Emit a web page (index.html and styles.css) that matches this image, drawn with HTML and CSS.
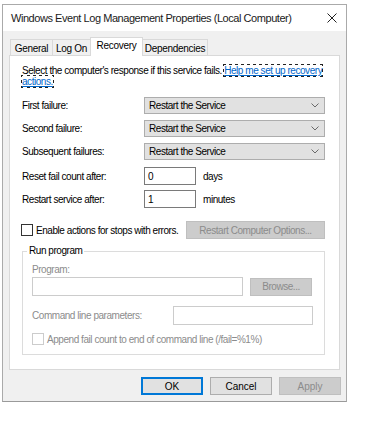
FILE: index.html
```html
<html lang="en-US"><head>
    <title>Windows Event Log Management Properties</title>
<link rel="stylesheet" href="styles.css">
</head>

<body>
    <div class="window">
        <div class="titlebar">
            <span class="title">Windows Event Log Management Properties (Local Computer)</span>
            <svg class="close" width="10" height="10" viewBox="0 0 10 10">
                <path d="M0.5 0.5 L9.5 9.5 M9.5 0.5 L0.5 9.5" stroke="#222" stroke-width="1" fill="none"/>
            </svg>
        </div>
        <div class="client">
            <ul class="tabs">
                <li class="tab tab-general">General</li>
                <li class="tab tab-logon">Log On</li>
                <li class="tab tab-recovery active">Recovery</li>
                <li class="tab tab-deps">Dependencies</li>
            </ul>
            <section class="panel">
                <p class="intro"><span>Select the computer's response if this service fails.</span> <a href="#" class="help"><span>Help me set up recovery</span> <span>actions.</span></a></p>

                <div class="row row-select">
                    <label>First failure:</label>
                    <div class="select">Restart the Service
                        <svg class="chevron" width="8" height="5" viewBox="0 0 8 5"><polyline points="0.5,0.5 4,4 7.5,0.5" stroke="#6a6a6a" fill="none"/></svg>
                    </div>
                </div>
                <div class="row row-select">
                    <label>Second failure:</label>
                    <div class="select">Restart the Service
                        <svg class="chevron" width="8" height="5" viewBox="0 0 8 5"><polyline points="0.5,0.5 4,4 7.5,0.5" stroke="#6a6a6a" fill="none"/></svg>
                    </div>
                </div>
                <div class="row row-select">
                    <label>Subsequent failures:</label>
                    <div class="select">Restart the Service
                        <svg class="chevron" width="8" height="5" viewBox="0 0 8 5"><polyline points="0.5,0.5 4,4 7.5,0.5" stroke="#6a6a6a" fill="none"/></svg>
                    </div>
                </div>
                <div class="row row-input row-reset">
                    <label>Reset fail count after:</label>
                    <div class="textbox">0</div>
                    <span class="unit">days</span>
                </div>
                <div class="row row-input">
                    <label>Restart service after:</label>
                    <div class="textbox">1</div>
                    <span class="unit">minutes</span>
                </div>

                <div class="errors-row">
                    <span class="checkbox"></span>
                    <span class="check-label">Enable actions for stops with errors.</span>
                    <span class="button disabled restart-btn">Restart Computer Options...</span>
                </div>

                <fieldset class="group">
                    <legend>Run program</legend>
                    <div class="group-body">
                        <div class="dim program-label">Program:</div>
                        <div class="program-row">
                            <div class="textbox off program-box"></div>
                            <span class="button disabled browse-btn">Browse...</span>
                        </div>
                        <div class="cmd-row">
                            <span class="dim">Command line parameters:</span>
                            <div class="textbox off cmd-box"></div>
                        </div>
                        <div class="append-row">
                            <span class="checkbox off"></span>
                            <span class="dim">Append fail count to end of command line (/fail=%1%)</span>
                        </div>
                    </div>
                </fieldset>
            </section>
            <div class="buttons">
                <span class="button default">OK</span>
                <span class="button">Cancel</span>
                <span class="button disabled">Apply</span>
            </div>
        </div>
    </div>
</body></html>
```

FILE: styles.css
```css
body {
    margin: 0;
    background-color: #ffffff;
    font: 10px "Liberation Sans", Arial, sans-serif;
    color: #000000;
}
.window {
    width: 345px;
    margin: 4px 0 0 2px;
    border: 1px solid #aaaaaa;
    border-bottom-color: #9a9a9a;
    box-sizing: border-box;
}
.titlebar {
    height: 26px;
    background-color: #ffffff;
    display: flex;
    align-items: center;
    padding: 0 8px;
}
.title {
    flex: 1;
    font-size: 11px;
    color: #1a1a1a;
    letter-spacing: -0.45px;
}
.close {
    margin-right: 1px;
}
.client {
    background-color: #f0f0f0;
    padding: 6px 6px 6px 6px;
}
ul.tabs {
    list-style-type: none;
    margin: 0 0 0 1px;
    padding: 0;
    height: 18px;
    display: flex;
    align-items: flex-end;
}
.tab {
    height: 16px;
    box-sizing: border-box;
    border: 1px solid #d9d9d9;
    border-bottom: none;
    margin-left: -1px;
    display: flex;
    align-items: center;
    justify-content: center;
    padding-top: 1px;
    letter-spacing: -0.3px;
}
.tab:first-child {
    margin-left: 0;
}
.tab.active {
    height: 19px;
    margin-bottom: -1px;
    background-color: #ffffff;
    position: relative;
    z-index: 1;
    padding-top: 0;
    padding-bottom: 3px;
}
.tab-general { width: 43px; }
.tab-logon { width: 39px; }
.tab-recovery { width: 53px; }
.tab-deps { width: 66px; }
.panel {
    height: 315px;
    box-sizing: border-box;
    background-color: #ffffff;
    border: 1px solid #d9d9d9;
    padding: 9px 14px 0 12px;
    letter-spacing: -0.45px;
}
.intro {
    margin: 0;
    line-height: 11px;
}
.help {
    color: #0066cc;
    outline: 1px dotted #222;
}
.row {
    display: flex;
    align-items: center;
}
.row label {
    width: 122px;
}
.row-select {
    margin-top: 6px;
}
.row-select:first-of-type {
    margin-top: 10px;
}
.select {
    width: 181px;
    height: 17px;
    box-sizing: border-box;
    background-color: #e1e1e1;
    border: 1px solid #adadad;
    padding-left: 4px;
    display: flex;
    align-items: center;
    justify-content: space-between;
    padding-right: 5px;
}
.row-input {
    margin-top: 5px;
}
.row-reset {
    margin-top: 7px;
}
.textbox {
    width: 52px;
    height: 18px;
    box-sizing: border-box;
    border: 1px solid #7a7a7a;
    background-color: #ffffff;
    padding-left: 3px;
    display: flex;
    align-items: center;
}
.textbox.off {
    border-color: #cccccc;
}
.unit {
    margin-left: 7px;
}
.errors-row {
    display: flex;
    align-items: center;
    margin: 13px 0 0 -1px;
    width: 304px;
}
.checkbox {
    width: 12px;
    height: 12px;
    box-sizing: border-box;
    border: 1px solid #333333;
    background-color: #ffffff;
    margin-right: 3px;
}
.checkbox.off {
    border-color: #cccccc;
}
.button {
    height: 18px;
    box-sizing: border-box;
    border: 1px solid #adadad;
    background-color: #e1e1e1;
    display: flex;
    align-items: center;
    justify-content: center;
    width: 62px;
}
.button.disabled {
    background-color: #cccccc;
    border-color: #bfbfbf;
    color: #8b8b8b;
}
.button.default {
    border: 1px solid #0078d7;
    box-shadow: inset 0 0 0 1px #0078d7;
}
.restart-btn {
    width: 139px;
    margin-left: auto;
}
fieldset.group {
    margin: 6px 0 0 0;
    padding: 0;
    width: 303px;
    box-sizing: border-box;
    border: 1px solid #dcdcdc;
}
fieldset.group legend {
    margin-left: 4px;
    padding: 0 2px;
    line-height: 12px;
}
.group-body {
    padding: 7px 11px 9px 9px;
}
.dim {
    color: #8c8c8c;
}
.program-label {
    line-height: 12px;
}
.program-row {
    display: flex;
    align-items: center;
    margin-top: 1px;
}
.program-box {
    width: 211px;
    height: 19px;
}
.browse-btn {
    margin-left: 7px;
}
.cmd-row {
    display: flex;
    align-items: center;
    justify-content: space-between;
    margin-top: 10px;
}
.cmd-box {
    width: 140px;
    height: 19px;
}
.append-row {
    display: flex;
    align-items: center;
    margin-top: 8px;
}
.buttons {
    display: flex;
    justify-content: flex-end;
    gap: 7px;
    margin: 7px -1px 0 0;
}
```
